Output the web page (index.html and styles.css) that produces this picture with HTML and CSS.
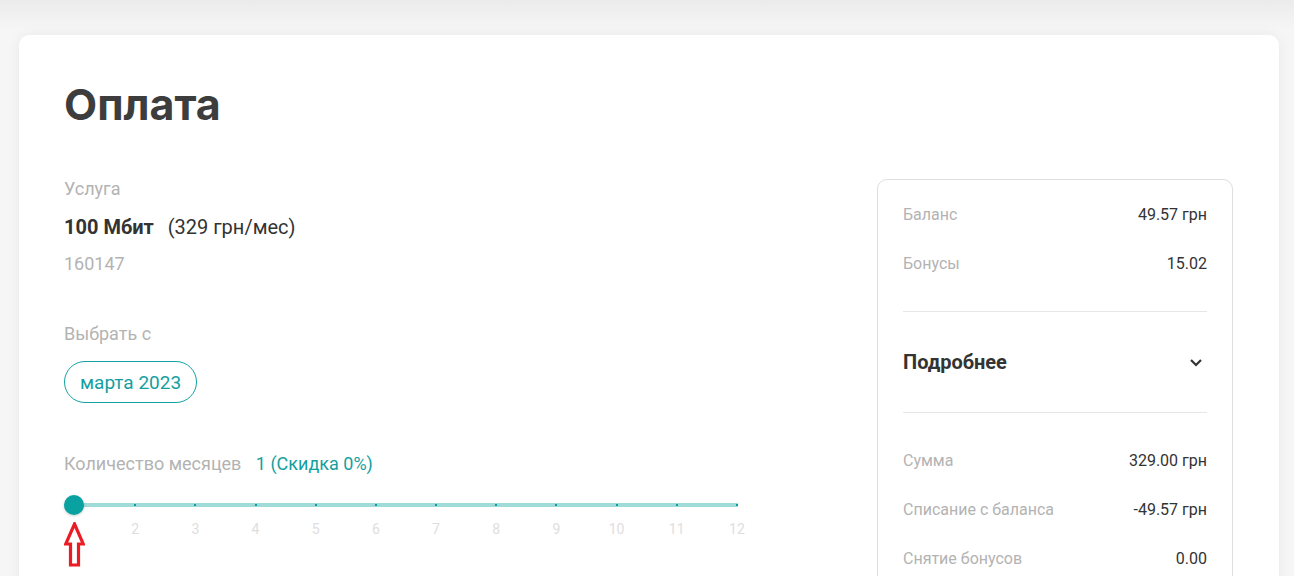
FILE: index.html
```html
<!DOCTYPE html>
<html lang="ru">
<head>
  <meta charset="UTF-8" />
  <meta name="viewport" content="width=device-width, initial-scale=1" />
  <title>Оплата</title>
  <link rel="stylesheet" href="styles.css">
</head>
<body>

<div class="page">
  <div class="card">
    <h1 class="title">Оплата</h1>

    <div class="columns">
      <section class="main">
        <div class="label">Услуга</div>
        <div class="service"><strong>100 Мбит</strong><span class="price">(329 грн/мес)</span></div>
        <div class="account">160147</div>

        <div class="label section">Выбрать с</div>
        <button class="pill">марта 2023</button>

        <div class="label section months">Количество месяцев <span class="accent">1 (Скидка 0%)</span></div>

        <div class="slider">
          <div class="track">
            <span></span><span></span><span></span><span></span><span></span><span></span>
            <span></span><span></span><span></span><span></span><span></span><span></span>
          </div>
          <div class="thumb"></div>
          <svg class="arrow" width="21" height="45" viewBox="0 0 21 45">
            <polygon points="10.5,2 19.3,22 14.5,22 14.5,43 6.5,43 6.5,22 1.7,22" fill="#fff" stroke="#ec1c24" stroke-width="3.2"/>
          </svg>
        </div>
        <div class="ticks">
          <span></span><span>2</span><span>3</span><span>4</span><span>5</span><span>6</span>
          <span>7</span><span>8</span><span>9</span><span>10</span><span>11</span><span>12</span>
        </div>
      </section>

      <aside class="summary">
        <div class="group">
          <div class="row"><span>Баланс</span><b>49.57 грн</b></div>
          <div class="row"><span>Бонусы</span><b>15.02</b></div>
        </div>
        <div class="details">
          <span>Подробнее</span>
          <svg width="14" height="9" viewBox="0 0 14 9"><path d="M2 2 L7 7 L12 2" fill="none" stroke="#333" stroke-width="2.2"/></svg>
        </div>
        <div class="group last">
          <div class="row"><span>Сумма</span><b>329.00 грн</b></div>
          <div class="row"><span>Списание с баланса</span><b>-49.57 грн</b></div>
          <div class="row"><span>Снятие бонусов</span><b>0.00</b></div>
        </div>
      </aside>
    </div>
  </div>
</div>

</body>
</html>
```

FILE: styles.css
```css
body {
  margin: 0;
  font-family: Roboto, "Liberation Sans", sans-serif;
  background: linear-gradient(#ebebeb, #f6f6f6 30px) no-repeat, #f6f6f6;
  color: #333;
  overflow: hidden;
}
.page {
  padding: 35px 15px 0 19px;
}
.card {
  background: white;
  border-radius: 10px;
  box-shadow: 0 0 14px rgba(0,0,0,0.06);
  padding: 44px 46px 40px 45px;
  min-height: 600px;
}
.title {
  margin: 0 0 50px;
  font-family: Inter, "Open Sans", sans-serif;
  font-weight: 700;
  font-size: 43px;
  line-height: 50px;
  color: #3d3d3d;
}
.columns {
  display: flex;
  justify-content: space-between;
  align-items: flex-start;
}
.main {
  width: 674px;
}
.label {
  font-size: 18px;
  line-height: 20px;
  color: #b3b3b3;
}
.section {
  margin-top: 50px;
}
.service {
  margin-top: 16px;
  font-size: 20px;
  line-height: 24px;
  color: #333;
}
.service strong {
  font-weight: 700;
}
.price {
  margin-left: 14px;
}
.account {
  margin-top: 15px;
  font-size: 18px;
  line-height: 20px;
  color: #b3b3b3;
}
.pill {
  display: block;
  margin-top: 17px;
  height: 42px;
  padding: 0 15px;
  border: 1px solid #15a2a2;
  border-radius: 21px;
  background: white;
  color: #139f9f;
  font-family: inherit;
  font-size: 19px;
}
.months {
  margin-top: 51px;
}
.accent {
  color: #149f9f;
  margin-left: 10px;
}
.slider {
  position: relative;
  margin-top: 21px;
  height: 20px;
  padding-left: 10px;
}
.track {
  position: relative;
  top: 8px;
  height: 4px;
  background: #9fdcd9;
  display: flex;
  justify-content: space-between;
  align-items: center;
}
.track span {
  width: 2px;
  height: 2px;
  background: #0c9e9e;
}
.thumb {
  position: absolute;
  left: 0;
  top: 0;
  width: 20px;
  height: 20px;
  border-radius: 50%;
  background: #09a2a1;
  box-shadow: 0 1px 3px rgba(0,0,0,0.2);
}
.arrow {
  position: absolute;
  left: 0;
  top: 27px;
}
.ticks {
  margin-top: 6px;
  padding-left: 10px;
  display: flex;
  justify-content: space-between;
  font-size: 14px;
  line-height: 16px;
  color: #dedede;
}
.ticks span {
  width: 2px;
  display: flex;
  justify-content: center;
}
.summary {
  width: 304px;
  border: 1px solid #dedede;
  border-radius: 10px;
  padding: 0 25px;
}
.group {
  padding: 10px 0 23px;
  border-bottom: 1px solid #e6e6e6;
}
.group.last {
  border-bottom: none;
  padding-top: 23px;
}
.row {
  height: 49px;
  display: flex;
  justify-content: space-between;
  align-items: center;
  font-size: 16px;
}
.row span {
  color: #b3b3b3;
}
.row b {
  font-weight: 400;
  color: #333;
}
.details {
  height: 100px;
  display: flex;
  justify-content: space-between;
  align-items: center;
  border-bottom: 1px solid #e6e6e6;
  font-size: 20px;
  font-weight: 700;
  padding-right: 4px;
}
```
